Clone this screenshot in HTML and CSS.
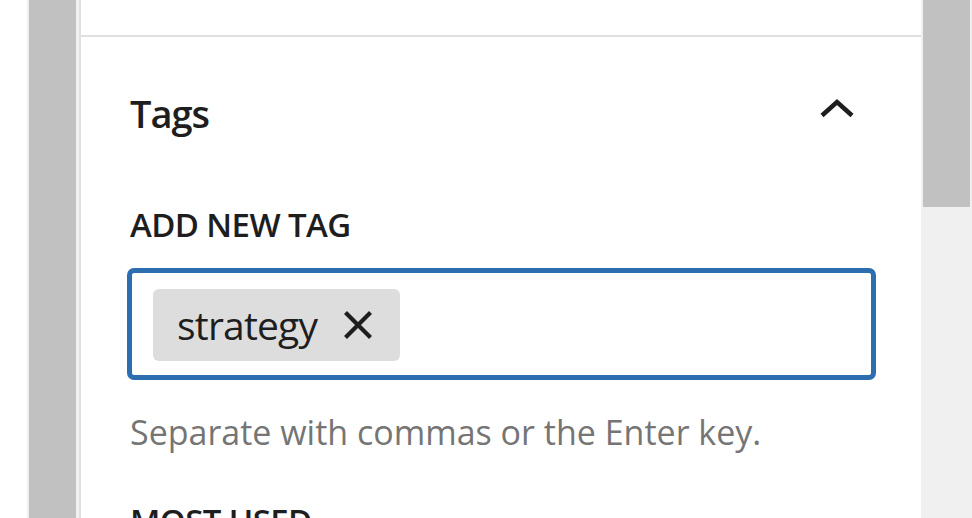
FILE: index.html
```html
<!DOCTYPE html>
<html lang="en">
<head>
<meta charset="utf-8">
<title>Tags panel</title>
<link rel="stylesheet" href="styles.css">
</head>
<body>
<div class="layout">
  <div class="gutter"></div>
  <div class="track track-left"><div class="thumb thumb-full"></div></div>
  <main class="panel">
    <div class="prev-section"></div>
    <section class="tags-section">
      <div class="section-head">
        <h2 class="section-title">Tags</h2>
        <svg class="chevron" width="36" height="22" viewBox="0 0 36 22" aria-hidden="true">
          <path d="M3 18.5 L18 5 L33 18.5" fill="none" stroke="#1e1e1e" stroke-width="4.5"/>
        </svg>
      </div>
      <label class="field-label">Add New Tag</label>
      <div class="token-field">
        <span class="token">
          <span class="token-text">strategy</span>
          <svg class="token-remove" width="32" height="32" viewBox="0 0 32 32" aria-hidden="true">
            <path d="M3.5 3.5 L28.5 28.5 M28.5 3.5 L3.5 28.5" fill="none" stroke="#1e1e1e" stroke-width="4.2"/>
          </svg>
        </span>
      </div>
      <p class="help">Separate with commas or the Enter key.</p>
      <h3 class="field-label most-used">Most Used</h3>
    </section>
  </main>
  <div class="track track-right"><div class="thumb thumb-short"></div></div>
</div>
</body>
</html>
```

FILE: styles.css
```css
html, body {
  margin: 0;
  padding: 0;
  background: #ffffff;
}

body {
  width: 972px;
  height: 518px;
  overflow: hidden;
  font-family: "Open Sans", "Noto Sans", sans-serif;
  color: #1e1e1e;
}

.layout {
  display: flex;
  height: 518px;
}

.gutter {
  width: 27px;
  flex: none;
  background: #ffffff;
}

.track {
  flex: none;
  background: #f0f0f0;
  box-sizing: border-box;
}

.track-left {
  width: 52px;
  padding-left: 2px;
  padding-right: 3px;
}

.track-right {
  width: 51px;
  padding-left: 2px;
  padding-right: 2px;
}

.thumb {
  background: #c1c1c1;
}

.thumb-full {
  height: 100%;
}

.thumb-short {
  height: 207px;
}

.panel {
  flex: 1;
  min-width: 0;
  border-left: 2px solid #e0e0e0;
  background: #ffffff;
  display: flex;
  flex-direction: column;
  overflow: hidden;
}

.prev-section {
  flex: none;
  height: 35px;
  border-bottom: 2px solid #e0e0e0;
}

.tags-section {
  flex: none;
  padding: 0 46px 0 49px;
}

.section-head {
  display: flex;
  justify-content: space-between;
  align-items: flex-start;
  margin-top: 56px;
  height: 40px;
}

.section-title {
  margin: 0;
  font-size: 38px;
  line-height: 40px;
  font-weight: 600;
  letter-spacing: -1px;
}

.chevron {
  margin-top: 4px;
  margin-right: 20px;
}

.field-label {
  display: block;
  margin: 75px 0 0;
  font-size: 33px;
  line-height: 33px;
  font-weight: 600;
  letter-spacing: -0.6px;
  text-transform: uppercase;
}

.token-field {
  margin: 27px -1px 0 -3px;
  height: 112px;
  box-sizing: border-box;
  border: 5px solid #2c6eb0;
  border-radius: 7px;
  padding: 16px 21px;
  display: flex;
  align-items: flex-start;
}

.token {
  display: flex;
  align-items: center;
  height: 72px;
  padding: 0 26px 0 24px;
  background: #dddddd;
  border-radius: 6px;
}

.token-text {
  font-size: 39px;
  line-height: 72px;
  letter-spacing: -0.8px;
}

.token-remove {
  margin-left: 25px;
}

.help {
  margin: 35px 0 0;
  font-size: 34px;
  line-height: 34px;
  color: #757575;
}

.most-used {
  margin-top: 55px;
}
```
